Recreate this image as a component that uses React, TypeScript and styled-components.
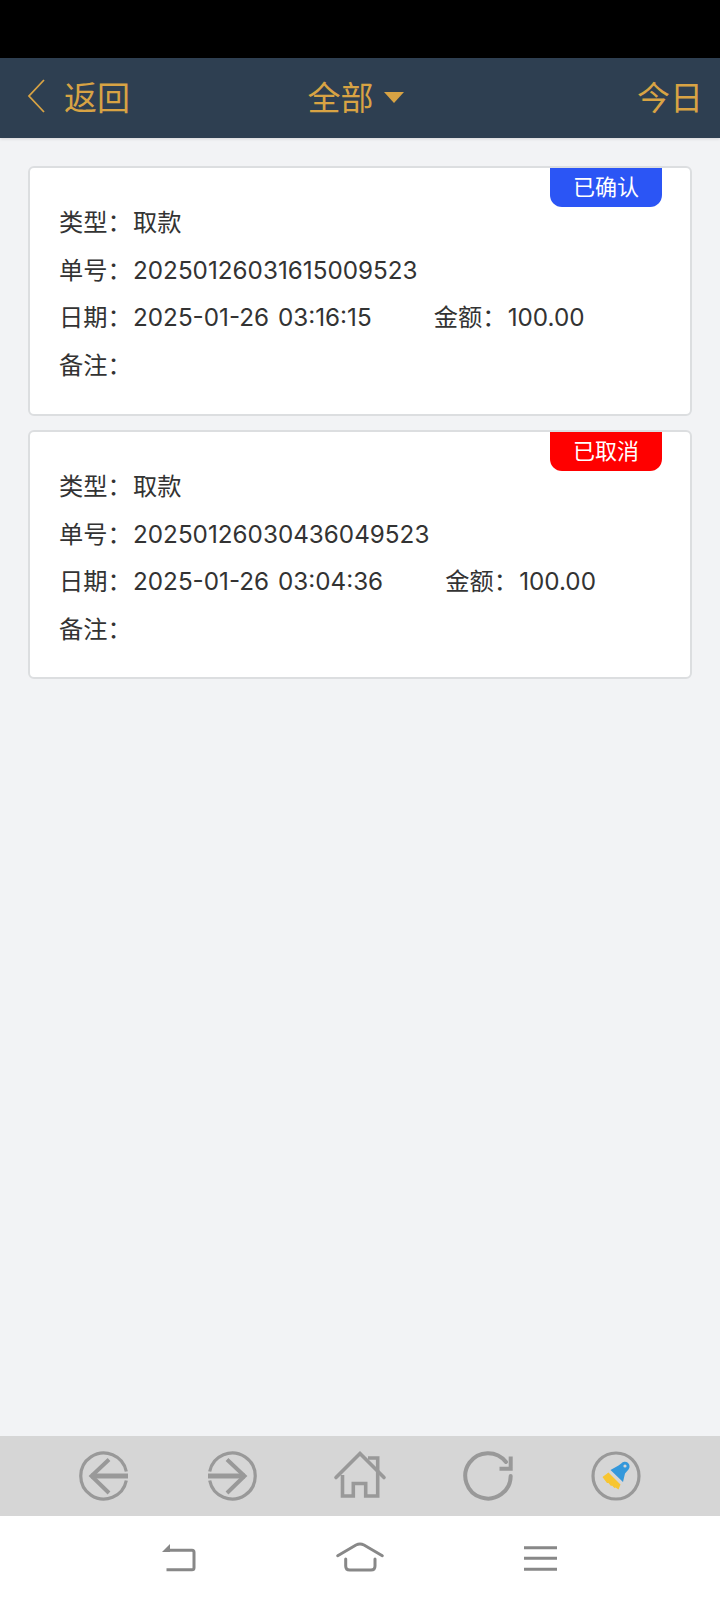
import React from 'react';
import styled, { createGlobalStyle } from 'styled-components';

const GlobalStyle = createGlobalStyle`
  html, body {
    margin: 0;
    padding: 0;
    background: #f2f3f5;
  }
  * {
    box-sizing: border-box;
  }
`;

const Page = styled.div`
  width: 720px;
  height: 1600px;
  display: flex;
  flex-direction: column;
  font-family: Inter, "Noto Sans CJK SC", sans-serif;
  background: #f2f3f5;
`;

const StatusBar = styled.div`
  height: 58px;
  background: #000;
`;

const Header = styled.header`
  height: 80px;
  padding: 0 17px 5px 27px;
  display: grid;
  grid-template-columns: 1fr auto 1fr;
  align-items: center;
  background: #2e3f51;
  color: #d8a344;
  font-size: 33px;
  box-shadow: 0 1px 3px rgba(0, 0, 0, 0.12);
`;

const BackLink = styled.div`
  display: flex;
  align-items: center;
  gap: 18px;
`;

const Title = styled.div`
  display: flex;
  align-items: center;
  gap: 10px;
  margin-right: 19px;
`;

const Caret = styled.span`
  width: 0;
  height: 0;
  margin-top: 4px;
  border-left: 10px solid transparent;
  border-right: 10px solid transparent;
  border-top: 11px solid #d8a344;
`;

const TodayLink = styled.div`
  justify-self: end;
`;

const List = styled.main`
  flex: 1;
  padding: 28px 28px 0 28px;
  display: flex;
  flex-direction: column;
  gap: 14px;
`;

const Card = styled.section`
  position: relative;
  height: 250px;
  padding: 31px 28px 0 29px;
  background: #fff;
  border: 2px solid #dcdee0;
  border-radius: 6px;
  color: #333;
  font-size: 24.25px;
  word-spacing: 2px;

  &:last-child {
    height: 249px;
  }
`;

const Badge = styled.span<{ $color: string }>`
  position: absolute;
  top: 0;
  right: 28px;
  width: 112px;
  height: 39px;
  padding-bottom: 5px;
  display: flex;
  align-items: center;
  justify-content: center;
  background: ${(p) => p.$color};
  border-radius: 0 0 12px 12px;
  color: #fff;
  font-size: 22px;
`;

const Row = styled.div`
  display: flex;
  align-items: baseline;
  line-height: 47.5px;
`;

const Label = styled.span`
  width: 74px;
  flex-shrink: 0;
`;

const Amount = styled.div`
  display: flex;
  align-items: baseline;
  margin-left: 62px;
`;

const ToolBar = styled.nav`
  height: 80px;
  display: flex;
  align-items: center;
  justify-content: center;
  gap: 78px;
  background: #d6d6d6;
`;

const SystemBar = styled.div`
  height: 84px;
  display: flex;
  align-items: center;
  justify-content: center;
  gap: 139px;
  background: #fff;
`;

const Icon = styled.svg`
  overflow: visible;
`;

const records = [
  { status: '已确认', color: '#2b55f5', no: '20250126031615009523', date: '2025-01-26 03:16:15' },
  { status: '已取消', color: '#ff0000', no: '20250126030436049523', date: '2025-01-26 03:04:36' },
];

const GREY = '#999';
const SYS_GREY = '#888';

const ArrowIcon: React.FC<{ flip?: boolean }> = ({ flip }) => (
  <Icon width="50" height="50" viewBox="0 0 50 50" fill="none" stroke={GREY}>
    <g transform={flip ? 'translate(50 0) scale(-1 1)' : undefined}>
      <path strokeWidth="3.2" d="M47.3 20.5 A23 23 0 1 0 47.3 29.5" />
      <path strokeWidth="4" d="M30 8.5 L12.5 25 L30 42" />
      <path strokeWidth="5" d="M12 25 H49" />
    </g>
  </Icon>
);

const HomeIcon: React.FC = () => (
  <Icon width="50" height="50" viewBox="0 0 50 50" fill="none" stroke={GREY} strokeWidth="3.6">
    <path d="M1 26.5 L25 2.5 L49 26.5" strokeLinecap="round" />
    <path d="M7.5 24 V45 H18.3 V32.5 H30.7 V45 H42.7 V7 H33" />
  </Icon>
);

const RefreshIcon: React.FC = () => (
  <Icon width="50" height="50" viewBox="0 0 50 50" fill="none" stroke={GREY} strokeWidth="4">
    <path strokeLinecap="round" d="M47.7 25 A22.7 22.7 0 1 1 43 11" />
    <path d="M47.7 5.5 V17.7 H36.5" />
  </Icon>
);

const BrushIcon: React.FC = () => (
  <Icon width="50" height="50" viewBox="0 0 50 50" fill="none">
    <circle cx="25" cy="25" r="23" stroke={GREY} strokeWidth="3.2" />
    <path fill="#3498db" d="M19.5 19 L27.5 14.5 L30.2 12.5 A4.6 4.6 0 0 1 37.5 18.5 L34 22.5 L32 31 Z" />
    <circle cx="34" cy="15" r="1.6" fill="#d6d6d6" />
    <path fill="#f7c531" d="M17.5 21.5 L29.5 33.5 L27.5 38.5 L24.5 36.5 L23.5 37 L21 34.5 L20 35 L17.5 32 L16 32 L11.5 26 Z" />
  </Icon>
);

const SysBackIcon: React.FC = () => (
  <Icon width="36" height="36" viewBox="0 0 36 36" fill="none" stroke={SYS_GREY} strokeWidth="3">
    <path d="M9 10.3 H31 Q33 10.3 33 12.3 V27.7 Q33 29.7 31 29.7 H5.5" />
    <path fill={SYS_GREY} stroke="none" d="M1 12 L9 4 V12 Z" />
  </Icon>
);

const SysHomeIcon: React.FC = () => (
  <Icon width="48" height="36" viewBox="0 0 48 36" fill="none" stroke={SYS_GREY} strokeWidth="3" strokeLinecap="round">
    <path d="M1.7 15.7 L20 5 Q24 3 28 5 L46.3 15.7" />
    <path d="M9.7 19 V26 Q9.7 30 13.7 30 H35 Q39 30 39 26 V19" />
  </Icon>
);

const SysMenuIcon: React.FC = () => (
  <Icon width="36" height="36" viewBox="0 0 36 36" fill="none" stroke={SYS_GREY} strokeWidth="3">
    <path d="M1 7.7 H34 M1 18.3 H34 M1 29.3 H34" />
  </Icon>
);

const App: React.FC = () => (
  <>
    <GlobalStyle />
    <Page>
      <StatusBar />
      <Header>
        <BackLink>
          <svg width="19" height="34" viewBox="0 0 19 34" fill="none" stroke="#d8a344" strokeWidth="1.8">
            <path d="M17 1 L2 17 L17 33" />
          </svg>
          返回
        </BackLink>
        <Title>
          全部
          <Caret />
        </Title>
        <TodayLink>今日</TodayLink>
      </Header>
      <List>
        {records.map((record) => (
          <Card key={record.no}>
            <Badge $color={record.color}>{record.status}</Badge>
            <Row>
              <Label>类型：</Label>
              <span>取款</span>
            </Row>
            <Row>
              <Label>单号：</Label>
              <span>{record.no}</span>
            </Row>
            <Row>
              <Label>日期：</Label>
              <span>{record.date}</span>
              <Amount>
                <Label>金额：</Label>
                <span>100.00</span>
              </Amount>
            </Row>
            <Row>
              <Label>备注：</Label>
            </Row>
          </Card>
        ))}
      </List>
      <ToolBar>
        <ArrowIcon />
        <ArrowIcon flip />
        <HomeIcon />
        <RefreshIcon />
        <BrushIcon />
      </ToolBar>
      <SystemBar>
        <SysBackIcon />
        <SysHomeIcon />
        <SysMenuIcon />
      </SystemBar>
    </Page>
  </>
);

export default App;
